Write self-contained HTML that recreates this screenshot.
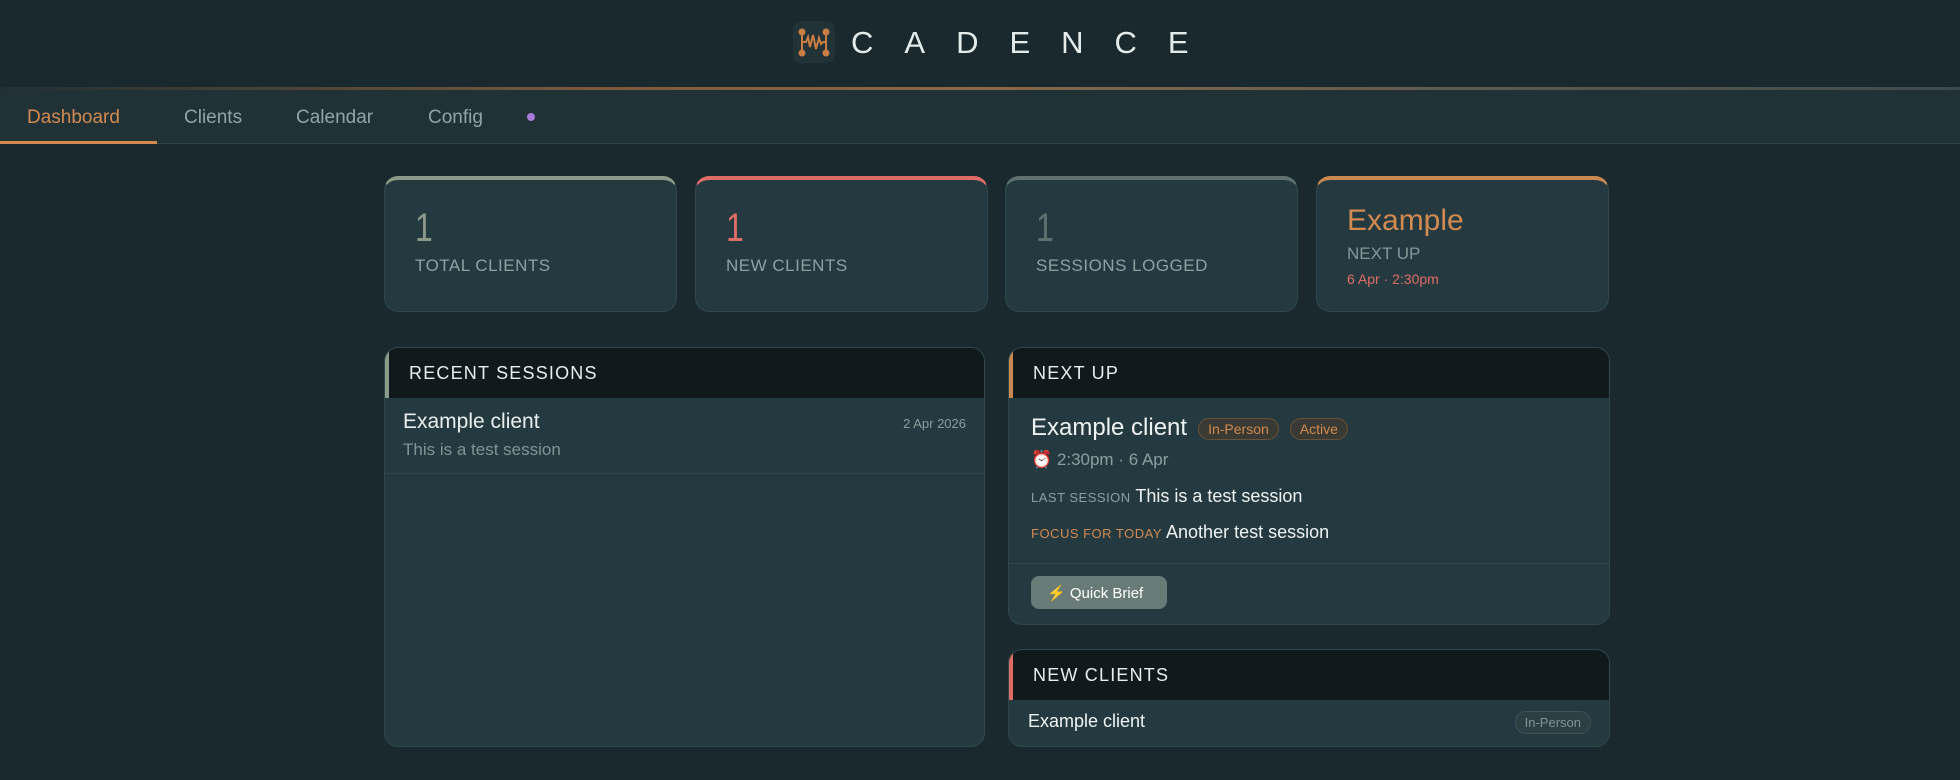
<!DOCTYPE html>
<html><head><meta charset="utf-8"><style>
*{box-sizing:border-box;margin:0;padding:0}
body{width:1960px;height:780px;background:#1a292d;font-family:"Liberation Sans",sans-serif;position:relative;overflow:hidden;color:#e6eeec}
.hdr{position:absolute;left:0;top:0;width:1960px;height:87px;background:#1a292d}
.line{position:absolute;left:0;top:87px;width:1960px;height:3px;background:linear-gradient(90deg,#1f2f33 0%,#7a5a3c 30%,#8a6a48 50%,#5e5a50 75%,#3d4b4d 100%)}
.logo{position:absolute;left:793px;top:21px;width:42px;height:42px;border-radius:8px;background:#223337}
.title{position:absolute;left:851px;top:25px;font-size:31px;letter-spacing:31px;color:#e3ecea;line-height:36px}
.nav{position:absolute;left:0;top:90px;width:1960px;height:54px;background:#213237;border-bottom:1px solid #2f464b}
.nav span{position:absolute;top:17px;font-size:19px;color:#8fa6a4}
.nav .act{color:#d28a50}
.uline{position:absolute;left:0;top:51px;width:157px;height:3px;background:#d28a50}
.dot{position:absolute;left:527px;top:23px;width:8px;height:8px;border-radius:50%;background:#a77bd6}
.stat{position:absolute;top:176px;width:293px;height:136px;background:#253a40;border:1px solid #30484d;border-radius:14px;border-top:4px solid}
.stat .n{position:absolute;left:30px;top:26px;font-size:40px;line-height:44px;font-weight:300;transform:scaleX(.8);transform-origin:left}
.stat .l{position:absolute;left:30px;top:76px;font-size:17px;color:#8aa3a1;letter-spacing:.5px}
.panel{position:absolute;background:#253a40;border:1px solid #30484d;border-radius:14px;overflow:hidden}
.ph{height:50px;background:#10191c;border-left:4px solid;padding:15px 0 0 20px;font-size:18px;letter-spacing:1.2px;color:#e8efee}
.badge{display:inline-block;font-size:14px;padding:2px 9px;border-radius:11px;border:1px solid #6a5036;background:#3a3a34;color:#d28a50;vertical-align:middle;margin-left:11px}
</style></head><body>
<div class="hdr"></div>
<div class="logo"><svg width="42" height="42" viewBox="0 0 42 42"><g stroke="#c97d43" stroke-width="2" fill="none"><path d="M9 11V32M33 11V32"/><path d="M9 21H13L15 16L17 26L20 14L23 28L26 17L28 23L30 21H33"/></g><g fill="#c97d43"><circle cx="9" cy="11" r="3.5"/><circle cx="33" cy="11" r="3.5"/><circle cx="9" cy="32" r="3.5"/><circle cx="33" cy="32" r="3.5"/></g></svg></div>
<div class="title">CADENCE</div>
<div class="line"></div>
<div class="nav">
<span class="act" style="left:27px">Dashboard</span>
<span style="left:184px">Clients</span>
<span style="left:296px">Calendar</span>
<span style="left:428px">Config</span>
<div class="dot"></div>
<div class="uline"></div>
</div>

<div class="stat" style="left:384px;border-top-color:#8c9a8a"><div class="n" style="color:#8c9a8a">1</div><div class="l">TOTAL CLIENTS</div></div>
<div class="stat" style="left:695px;border-top-color:#e06c66"><div class="n" style="color:#e06c66">1</div><div class="l">NEW CLIENTS</div></div>
<div class="stat" style="left:1005px;border-top-color:#5f716f"><div class="n" style="color:#5f716f">1</div><div class="l">SESSIONS LOGGED</div></div>
<div class="stat" style="left:1316px;border-top-color:#c98950"><div style="position:absolute;left:30px;top:24px;font-size:30px;color:#d28a50">Example</div><div style="position:absolute;left:30px;top:64px;font-size:17px;color:#7f9a98">NEXT UP</div><div style="position:absolute;left:30px;top:91px;font-size:14px;color:#e06c66">6 Apr · 2:30pm</div></div>

<div class="panel" style="left:384px;top:347px;width:601px;height:400px">
<div class="ph" style="border-left-color:#8c9a8a">RECENT SESSIONS</div>
<div style="position:relative;height:76px;border-bottom:1px solid #30484d">
<div style="position:absolute;left:18px;top:12px;font-size:21px;color:#e8efee">Example client</div>
<div style="position:absolute;left:18px;top:42px;font-size:17px;color:#7f9593">This is a test session</div>
<div style="position:absolute;right:18px;top:18px;font-size:13px;color:#8a9e9c">2 Apr 2026</div>
</div></div>

<div class="panel" style="left:1008px;top:347px;width:602px;height:278px">
<div class="ph" style="border-left-color:#c98950">NEXT UP</div>
<div style="position:relative;height:166px;border-bottom:1px solid #30484d">
<div style="position:absolute;left:22px;top:16px;font-size:24px;color:#eef3f2;white-space:nowrap">Example client<span class="badge">In-Person</span><span class="badge">Active</span></div>
<div style="position:absolute;left:22px;top:52px;font-size:17px;color:#8aa09e">⏰ 2:30pm · 6 Apr</div>
<div style="position:absolute;left:22px;top:88px;font-size:18px;color:#eef3f2"><span style="font-size:13px;color:#8aa09e;letter-spacing:.5px">LAST SESSION</span> This is a test session</div>
<div style="position:absolute;left:22px;top:124px;font-size:18px;color:#eef3f2"><span style="font-size:13px;color:#d28a50;letter-spacing:.5px">FOCUS FOR TODAY</span> Another test session</div>
</div>
<div style="position:absolute;left:22px;top:228px;width:136px;height:33px;border-radius:8px;background:#687b76;color:#fff;font-size:15px;padding:8px 0 0 16px"><span style="color:#f2c230">⚡</span> Quick Brief</div>
</div>

<div class="panel" style="left:1008px;top:649px;width:602px;height:98px">
<div class="ph" style="border-left-color:#e06c66">NEW CLIENTS</div>
<div style="position:absolute;left:19px;top:61px;font-size:18px;color:#eef3f2">Example client</div>
<div style="position:absolute;right:18px;top:61px;font-size:13px;padding:3px 9px;border-radius:11px;border:1px solid #3f5458;background:#2c3f43;color:#7f9593">In-Person</div>
</div>
</body></html>
